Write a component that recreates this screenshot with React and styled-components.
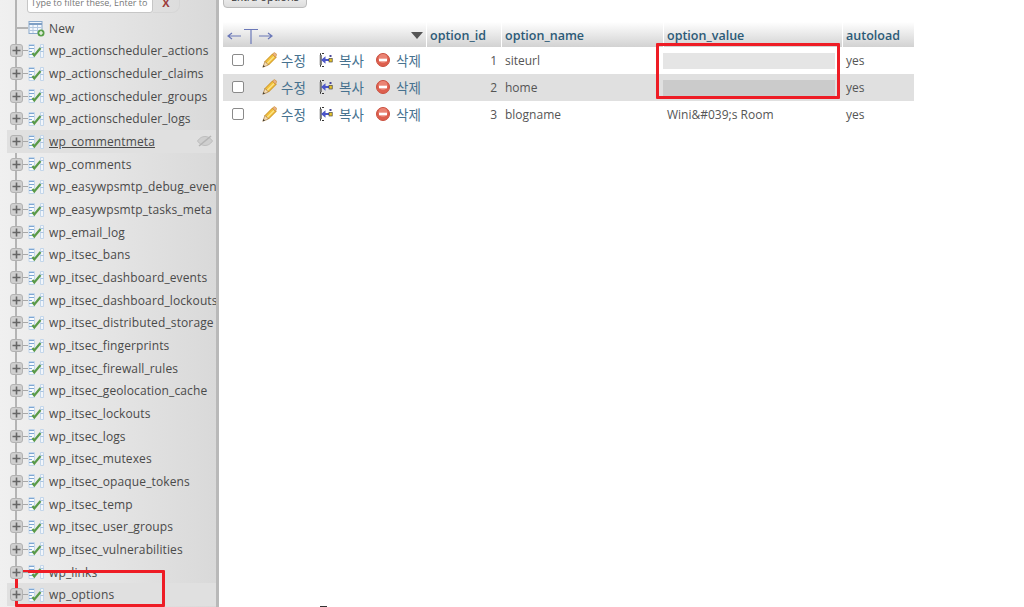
import React from 'react';
import styled, { createGlobalStyle } from 'styled-components';

const Global = createGlobalStyle`
  html, body { margin: 0; padding: 0; background: #fff; }
  body { font-family: "Open Sans", "Noto Sans CJK KR", sans-serif; font-size: 12px; color: #444; }
`;

const Page = styled.div`
  position: relative;
  display: flex;
  width: 1024px;
  height: 607px;
  overflow: hidden;
`;

const Sidebar = styled.aside`
  width: 216px;
  height: 607px;
  flex: none;
  overflow: hidden;
  border-right: 3px solid #b9b9b9;
  background: linear-gradient(to right, #f0f0f0, #d9d9d9);
`;

const FilterRow = styled.div`
  display: flex;
  margin: -13px 0 0 27px;
  height: 30px;
`;

const FilterInput = styled.div`
  width: 126px;
  height: 26px;
  box-sizing: border-box;
  background: #fff;
  border: 1px solid #c6c6c6;
  border-radius: 0 0 3px 3px;
  padding: 8px 0 0 3px;
  font-size: 9px;
  line-height: 13px;
  color: #777;
  white-space: nowrap;
  overflow: hidden;
`;

const ClearBox = styled.div`
  width: 27px;
  height: 26px;
  box-sizing: border-box;
  border: 1px solid #d6d6d6;
  border-left: 0;
  border-radius: 0 0 8px 0;
  text-align: center;
  padding-top: 7px;
  font-size: 11px;
  font-weight: 700;
  color: #9c3b3b;
`;

const Tree = styled.ul`
  position: relative;
  list-style: none;
  margin: 0;
  padding: 0;
  &::before {
    content: '';
    position: absolute;
    left: 15px;
    top: -18px;
    bottom: 0;
    width: 2px;
    background: #b4b4b4;
  }
`;

const TreeItem = styled.li`
  position: relative;
  display: flex;
  align-items: center;
  height: 22.67px;
  margin-left: ${(p) => (p.$wide ? '7px' : '0')};
  padding-left: ${(p) => (p.$wide ? '3px' : '10px')};
  background: ${(p) => (p.$active ? '#e0e0e0' : 'transparent')};
  white-space: nowrap;
  font-size: 12px;
  color: #4a4a4a;
  letter-spacing: 0.01em;
`;

const Expander = styled.span`
  position: relative;
  width: 13px;
  height: 13px;
  flex: none;
  box-sizing: border-box;
  border: 1px solid #b2b2b2;
  border-radius: 3px;
  background: #cfcfcf;
  margin-right: 5px;
  z-index: 1;
  display: flex;
  align-items: center;
  justify-content: center;
  &::after {
    content: '';
    position: absolute;
    left: 12px;
    top: 5px;
    width: 5px;
    height: 1px;
    background: #a8a8a8;
  }
`;

const Name = styled.span`
  margin-left: ${(p) => p.$gap ?? 5}px;
  text-decoration: ${(p) => (p.$underline ? 'underline' : 'none')};
`;

const NewConnector = styled.span`
  width: 12px;
  height: 2px;
  flex: none;
  margin-left: 6px;
  background: #b4b4b4;
`;

const EyeSlot = styled.span`
  position: absolute;
  right: 3px;
  top: 4px;
  display: flex;
`;

const Content = styled.main`
  flex: 1;
  padding: 0 0 0 4px;
  min-width: 0;
`;

const OptionsButton = styled.div`
  width: 84px;
  height: 22px;
  margin-top: -14px;
  box-sizing: border-box;
  border: 1px solid #bbb;
  border-radius: 4px;
  background: linear-gradient(#fff, #ddd);
  text-align: center;
  font-size: 11px;
  line-height: 19px;
  color: #333;
`;

const Table = styled.table`
  border-collapse: separate;
  border-spacing: 0;
  margin-top: 14px;
  table-layout: fixed;
  width: 691px;
`;

const Th = styled.th`
  height: 25px;
  padding: 1px 0 0 3px;
  box-sizing: border-box;
  text-align: left;
  font-size: 12.5px;
  font-weight: 600;
  color: #2c5a77;
  background: linear-gradient(#fff, #d2d2d2);
  border-left: ${(p) => (p.$first ? '0' : '1px solid #fff')};
  vertical-align: middle;
`;

const ArrowsCell = styled.div`
  display: flex;
  align-items: center;
  justify-content: space-between;
  padding: 0 3px 0 1px;
  margin-top: 1px;
`;

const Tr = styled.tr`
  background: ${(p) => (p.$alt ? '#e0e0e0' : '#fff')};
`;

const Td = styled.td`
  height: 27px;
  box-sizing: border-box;
  padding: 0 0 0 ${(p) => (p.$pad ?? 4)}px;
  font-size: 12px;
  color: #555;
  text-align: ${(p) => (p.$right ? 'right' : 'left')};
  padding-right: ${(p) => (p.$right ? '4px' : '0')};
  white-space: nowrap;
  overflow: hidden;
`;

const Actions = styled.div`
  display: flex;
  align-items: center;
  margin-top: -2px;
`;

const Check = styled.span`
  width: 10px;
  height: 10px;
  border: 1.5px solid #8a8a8a;
  border-radius: 2px;
  background: #fff;
  margin: 0 18px 0 9px;
  flex: none;
`;

const Action = styled.span`
  display: flex;
  align-items: center;
  gap: ${(p) => p.$gap || 4}px;
  width: ${(p) => p.$w}px;
  flex: none;
  color: #47728f;
  font-size: 13.5px;
`;

const Redacted = styled.div`
  width: ${(p) => (p.$dark ? '173px' : '172px')};
  height: 16px;
  margin-left: ${(p) => (p.$dark ? '-5px' : '-4px')};
  background: ${(p) => (p.$dark ? '#cbcbcb' : '#e5e5e5')};
`;

const RedBox = styled.div`
  position: absolute;
  box-sizing: border-box;
  border: 3.5px solid #ee1c25;
  border-radius: 1px;
  left: ${(p) => p.$x}px;
  top: ${(p) => p.$y}px;
  width: ${(p) => p.$w}px;
  height: ${(p) => p.$h}px;
`;

const Tick = styled.div`
  position: absolute;
  left: 320px;
  top: 606px;
  width: 7px;
  height: 1px;
  background: #333;
`;

const PlusIcon = () => (
  <svg width="9" height="9" viewBox="0 0 9 9">
    <path d="M4.500 .5v8M.5 4.500h8" stroke="#666" strokeWidth="1.600" />
  </svg>
);

const TableIcon = () => (
  <svg width="16" height="16" viewBox="0 0 16 16" style={{ flex: 'none' }}>
    <path d="M1 1.500h5.500v13H1z" fill="#f7fafd" stroke="#c3d6ea" />
    <path d="M1 2.500h5M1 5.500h5M1 8.500h3M1 11.500h5" stroke="#7ea6d2" />
    <path d="M12.500 1.500h3v13h-3z" fill="#f2f6fb" stroke="#c3d6ea" />
    <path d="M12.500 4.500h3M12.500 8.500h3" stroke="#a8c4e0" />
    <path d="M4.500 10l1.800 2.500L12.500 5" fill="none" stroke="#5a9a48" strokeWidth="2.200" />
  </svg>
);

const NewTableIcon = () => (
  <svg width="17" height="17" viewBox="0 0 17 17" style={{ flex: 'none' }}>
    <rect x="1" y="1.500" width="13" height="12" fill="#f3f7fc" stroke="#8aa9cc" />
    <path d="M1 4h13" stroke="#7f9fc4" strokeWidth="2" />
    <path d="M1.500 7.500h12M1.500 10.500h12M5 5v8M9.500 5v8" stroke="#b4c8e0" />
    <circle cx="13" cy="13" r="3.500" fill="#5aa04a" />
    <path d="M13 11v4M11 13h4" stroke="#fff" strokeWidth="1.200" />
  </svg>
);

const EyeOffIcon = () => (
  <svg width="16" height="14" viewBox="0 0 16 14">
    <path d="M.5 7C3 3.500 5.500 2.500 8 2.500S13 3.500 15.500 7C13 10.500 10.500 11.500 8 11.500S3 10.500.5 7z" fill="#cfcfcf" stroke="#bdbdbd" />
    <path d="M2 12L14 2" stroke="#b5b5b5" strokeWidth="1.600" />
  </svg>
);

const PencilIcon = () => (
  <svg width="15" height="16" viewBox="0 0 15 16" style={{ flex: 'none' }}>
    <path d="M3 9.500L10.500 2 14 5.500 6.500 13z" fill="#f2c13a" stroke="#c98d1c" />
    <path d="M5 11.500L12 4.500" stroke="#fbe48c" strokeWidth="1.200" />
    <path d="M10.500 2l1-1c.6-.5 1.300-.5 1.800 0l1 1c.4.500.4 1.100 0 1.600l-.8 1.900z" fill="#eab08a" stroke="#c98d1c" strokeWidth=".6" />
    <path d="M3 9.500L.8 15.200 6.500 13z" fill="#f3dcb4" stroke="#a97a35" strokeWidth=".7" />
    <path d="M.8 15.200l.8-2.200 1.400 1.400z" fill="#333" />
  </svg>
);

const CopyIcon = () => (
  <svg width="14" height="16" viewBox="0 0 14 16" style={{ flex: 'none' }}>
    <path d="M5 1.500H1.500v13H5" fill="none" stroke="#333" strokeDasharray="2 1" />
    <path d="M1.800 3v10" stroke="#777" strokeWidth="2.200" />
    <path d="M2 8l4.500-3.800V7H10v2H6.500v2.800z" fill="#4a55c9" />
    <rect x="10" y="6.500" width="3.200" height="3.500" fill="#e6c32c" stroke="#333" strokeWidth=".6" />
    <rect x="10.500" y="3" width="2" height="2" fill="#4a4a9a" />
  </svg>
);

const DeleteIcon = () => (
  <svg width="14" height="14" viewBox="0 0 14 14" style={{ flex: 'none' }}>
    <circle cx="7" cy="7" r="6.500" fill="#dd5f4e" stroke="#c9503f" />
    <circle cx="7" cy="5.500" r="4.500" fill="#ea8474" />
    <rect x="3" y="5.700" width="8" height="2.600" fill="#fff" />
  </svg>
);

const tables = [
  'wp_actionscheduler_actions',
  'wp_actionscheduler_claims',
  'wp_actionscheduler_groups',
  'wp_actionscheduler_logs',
  'wp_commentmeta',
  'wp_comments',
  'wp_easywpsmtp_debug_events',
  'wp_easywpsmtp_tasks_meta',
  'wp_email_log',
  'wp_itsec_bans',
  'wp_itsec_dashboard_events',
  'wp_itsec_dashboard_lockouts',
  'wp_itsec_distributed_storage',
  'wp_itsec_fingerprints',
  'wp_itsec_firewall_rules',
  'wp_itsec_geolocation_cache',
  'wp_itsec_lockouts',
  'wp_itsec_logs',
  'wp_itsec_mutexes',
  'wp_itsec_opaque_tokens',
  'wp_itsec_temp',
  'wp_itsec_user_groups',
  'wp_itsec_vulnerabilities',
  'wp_links',
  'wp_options',
];

const rows = [
  { id: 1, name: 'siteurl', value: null },
  { id: 2, name: 'home', value: null, alt: true },
  { id: 3, name: 'blogname', value: 'Wini&#039;s Room' },
];

export default function App() {
  return (
    <Page>
      <Global />
      <Sidebar>
        <FilterRow>
          <FilterInput>Type to filter these, Enter to</FilterInput>
          <ClearBox>X</ClearBox>
        </FilterRow>
        <Tree>
          <TreeItem>
            <NewConnector />
            <NewTableIcon />
            <Name $gap={4}>New</Name>
          </TreeItem>
          {tables.map((t) => {
            const hovered = t === 'wp_commentmeta';
            const wide = hovered || t === 'wp_options';
            return (
              <TreeItem key={t} $active={wide} $wide={wide}>
                <Expander><PlusIcon /></Expander>
                <TableIcon />
                <Name $underline={hovered}>{t}</Name>
                {hovered ? <EyeSlot><EyeOffIcon /></EyeSlot> : null}
              </TreeItem>
            );
          })}
        </Tree>
      </Sidebar>
      <Content>
        <OptionsButton>Extra options</OptionsButton>
        <Table>
          <colgroup>
            <col style={{ width: 203 }} />
            <col style={{ width: 75 }} />
            <col style={{ width: 162 }} />
            <col style={{ width: 179 }} />
            <col style={{ width: 72 }} />
          </colgroup>
          <thead>
            <tr>
              <Th $first>
                <ArrowsCell>
                  <svg width="48" height="18" viewBox="0 0 48 18">
                    <path d="M1 9h13M5 6L1 9l4 3M32 9h13M41 6l4 3-4 3M17 2.500h14M24 2.500V17" fill="none" stroke="#6b78b8" strokeWidth="1.200" />
                  </svg>
                  <svg width="12" height="8" viewBox="0 0 12 8">
                    <path d="M0 0h12L6 7z" fill="#555" />
                  </svg>
                </ArrowsCell>
              </Th>
              <Th>option_id</Th>
              <Th>option_name</Th>
              <Th>option_value</Th>
              <Th>autoload</Th>
            </tr>
          </thead>
          <tbody>
            {rows.map((r) => (
              <Tr key={r.id} $alt={r.alt}>
                <Td $pad={0}>
                  <Actions>
                    <Check />
                    <Action $w={57} $gap={4}><PencilIcon />수정</Action>
                    <Action $w={57} $gap={6}><CopyIcon />복사</Action>
                    <Action $w={50} $gap={6}><DeleteIcon />삭제</Action>
                  </Actions>
                </Td>
                <Td $right>{r.id}</Td>
                <Td>{r.name}</Td>
                <Td>{r.value || <Redacted $dark={r.alt} />}</Td>
                <Td>yes</Td>
              </Tr>
            ))}
          </tbody>
        </Table>
      </Content>
      <RedBox $x={656} $y={43} $w={184} $h={56} />
      <RedBox $x={15} $y={570} $w={150} $h={37} />
      <Tick />
    </Page>
  );
}
